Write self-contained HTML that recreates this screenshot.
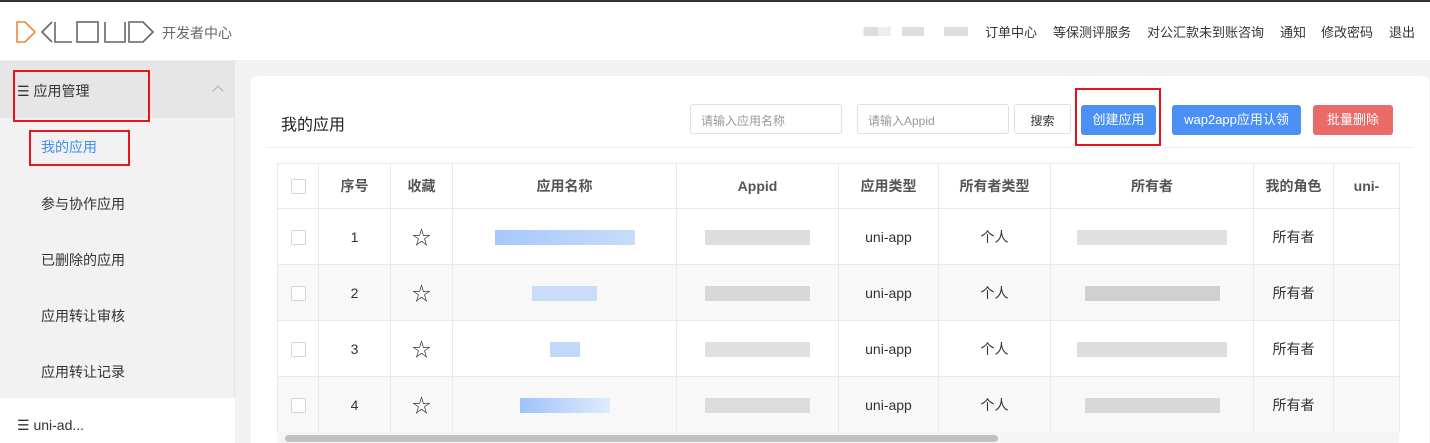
<!DOCTYPE html>
<html><head><meta charset="utf-8"><style>
*{margin:0;padding:0;box-sizing:border-box}
html,body{width:1430px;height:443px;overflow:hidden}
body{background:#f2f2f2;font-family:"Liberation Sans","Noto Sans CJK SC",sans-serif;position:relative;color:#333}
.abs{position:absolute}
.top{left:0;top:0;width:1430px;height:2px;background:#333}
.hdr{left:0;top:2px;width:1430px;height:58px;background:#fff}
.nav{top:22px;font-size:13px;color:#333}
.side{left:0;top:60px;width:235px;height:383px;background:#f2f2f2;border-right:1px solid #e4e4e4}
.red{border:2px solid #e3161e}
.card{left:251px;top:76px;width:1178px;height:367px;background:#fff;border-radius:6px 6px 0 0}
.inp{height:30px;border:1px solid #dcdfe6;border-radius:3px;font-size:12px;color:#999;padding:7px 10px;background:#fff}
.btn{height:30px;border-radius:3px;font-size:13px;color:#fff;text-align:center;line-height:30px}
table{border-collapse:collapse;position:absolute;left:277px;top:163px;table-layout:fixed;background:#fff}
td{border:1px solid #e8e8f0;text-align:center;font-size:14px;color:#333;height:56px;overflow:hidden;white-space:nowrap}
tr.h td{height:45px;color:#555;font-weight:bold;font-size:14px}
tr.g td{background:#f8f8f8}
.cb{display:inline-block;width:15px;height:15px;border:1px solid #d5d5d5;border-radius:2px;background:#fff;vertical-align:middle}
.bl{display:inline-block;height:15px;vertical-align:middle}
.st{font-size:19px;color:#333}
</style></head><body>
<div class="abs top"></div>
<div class="abs hdr"></div>
<svg class="abs" style="left:15px;top:21px" width="140" height="22" viewBox="0 0 140 22" fill="none" stroke-width="1.6">
<path d="M2 1H10L20 11L10 21H2Z" stroke="#e8883f"/>
<path d="M37 1L27 11L37 21" stroke="#666"/>
<path d="M40 1V21H57" stroke="#666"/>
<rect x="62" y="1" width="21" height="20" stroke="#666"/>
<path d="M90 1V21H110V1" stroke="#666"/>
<path d="M114 1H128L138 11L128 21H114Z" stroke="#666"/>
</svg>
<div class="abs" style="left:162px;top:23px;font-size:14px;color:#666">开发者中心</div>
<div class="abs" style="left:858px;top:27px;width:110px;height:9px;background:linear-gradient(90deg,#fff 0 5%,#ddd 5% 18%,#eee 18% 30%,#fff 30% 40%,#ddd 40% 60%,#fff 60% 78%,#ddd 78%)"></div>
<div class="abs nav" style="left:985px">订单中心</div>
<div class="abs nav" style="left:1053px">等保测评服务</div>
<div class="abs nav" style="left:1147px">对公汇款未到账咨询</div>
<div class="abs nav" style="left:1280px">通知</div>
<div class="abs nav" style="left:1321px">修改密码</div>
<div class="abs nav" style="left:1389px">退出</div>

<div class="abs side"></div>
<div class="abs" style="left:0;top:61px;width:235px;height:57px;background:#e6e6e6"></div>
<div class="abs" style="left:17px;top:81px;font-size:14px;color:#333">☰ 应用管理</div>
<div class="abs" style="left:214px;top:87px;width:8px;height:8px;border-left:1px solid #aaa;border-top:1px solid #aaa;transform:rotate(45deg)"></div>
<div class="abs red" style="left:13px;top:70px;width:137px;height:52px"></div>
<div class="abs" style="left:41px;top:137px;font-size:14px;color:#3f8ef0">我的应用</div>
<div class="abs red" style="left:29px;top:130px;width:101px;height:36px"></div>
<div class="abs" style="left:41px;top:194px;font-size:14px">参与协作应用</div>
<div class="abs" style="left:41px;top:250px;font-size:14px">已删除的应用</div>
<div class="abs" style="left:41px;top:306px;font-size:14px">应用转让审核</div>
<div class="abs" style="left:41px;top:362px;font-size:14px">应用转让记录</div>
<div class="abs" style="left:0;top:398px;width:235px;height:45px;background:#fff"></div>
<div class="abs" style="left:17px;top:417px;font-size:14px">☰ uni-ad...</div>

<div class="abs card"></div>
<div class="abs" style="left:281px;top:111px;font-size:16px;color:#222">我的应用</div>
<div class="abs" style="left:266px;top:147px;width:1147px;height:1px;background:#eef0f4"></div>
<div class="abs inp" style="left:690px;top:104px;width:152px">请输入应用名称</div>
<div class="abs inp" style="left:857px;top:104px;width:152px">请输入Appid</div>
<div class="abs inp" style="left:1014px;top:104px;width:57px;color:#333;text-align:center;padding:7px 0">搜索</div>
<div class="abs btn" style="left:1081px;top:105px;width:75px;background:#4a90f5">创建应用</div>
<div class="abs red" style="left:1075px;top:88px;width:86px;height:58px"></div>
<div class="abs btn" style="left:1172px;top:105px;width:129px;background:#4a90f5">wap2app应用认领</div>
<div class="abs btn" style="left:1313px;top:105px;width:80px;background:#e96a66">批量删除</div>

<table>
<colgroup><col style="width:41px"><col style="width:72px"><col style="width:62px"><col style="width:224px"><col style="width:162px"><col style="width:100px"><col style="width:112px"><col style="width:203px"><col style="width:80px"><col style="width:66px"></colgroup>
<tr class="h"><td><span class="cb"></span></td><td>序号</td><td>收藏</td><td>应用名称</td><td>Appid</td><td>应用类型</td><td>所有者类型</td><td>所有者</td><td>我的角色</td><td>uni-</td></tr>
<tr><td><span class="cb"></span></td><td>1</td><td class="st">☆</td><td><span class="bl" style="width:140px;background:linear-gradient(90deg,#a6c8fb,#c8dcfb)"></span></td><td><span class="bl" style="width:105px;background:#ddd"></span></td><td>uni-app</td><td>个人</td><td><span class="bl" style="width:150px;background:#e0e0e0"></span></td><td>所有者</td><td></td></tr>
<tr class="g"><td><span class="cb"></span></td><td>2</td><td class="st">☆</td><td><span class="bl" style="width:65px;background:#c9dcfa"></span></td><td><span class="bl" style="width:105px;background:#d8d8d8"></span></td><td>uni-app</td><td>个人</td><td><span class="bl" style="width:135px;background:#d0d0d0"></span></td><td>所有者</td><td></td></tr>
<tr><td><span class="cb"></span></td><td>3</td><td class="st">☆</td><td><span class="bl" style="width:30px;background:#c2d8fa"></span></td><td><span class="bl" style="width:105px;background:#e0e0e0"></span></td><td>uni-app</td><td>个人</td><td><span class="bl" style="width:150px;background:#ddd"></span></td><td>所有者</td><td></td></tr>
<tr class="g"><td><span class="cb"></span></td><td>4</td><td class="st">☆</td><td><span class="bl" style="width:90px;background:linear-gradient(90deg,#9fc3fa,#e0ebfc)"></span></td><td><span class="bl" style="width:105px;background:#dcdcdc"></span></td><td>uni-app</td><td>个人</td><td><span class="bl" style="width:135px;background:#d8d8d8"></span></td><td>所有者</td><td></td></tr>
</table>
<div class="abs" style="left:277px;top:432px;width:1122px;height:11px;background:#f5f5f5"></div>
<div class="abs" style="left:285px;top:435px;width:713px;height:7px;border-radius:4px;background:#c1c1c1"></div>
</body></html>
